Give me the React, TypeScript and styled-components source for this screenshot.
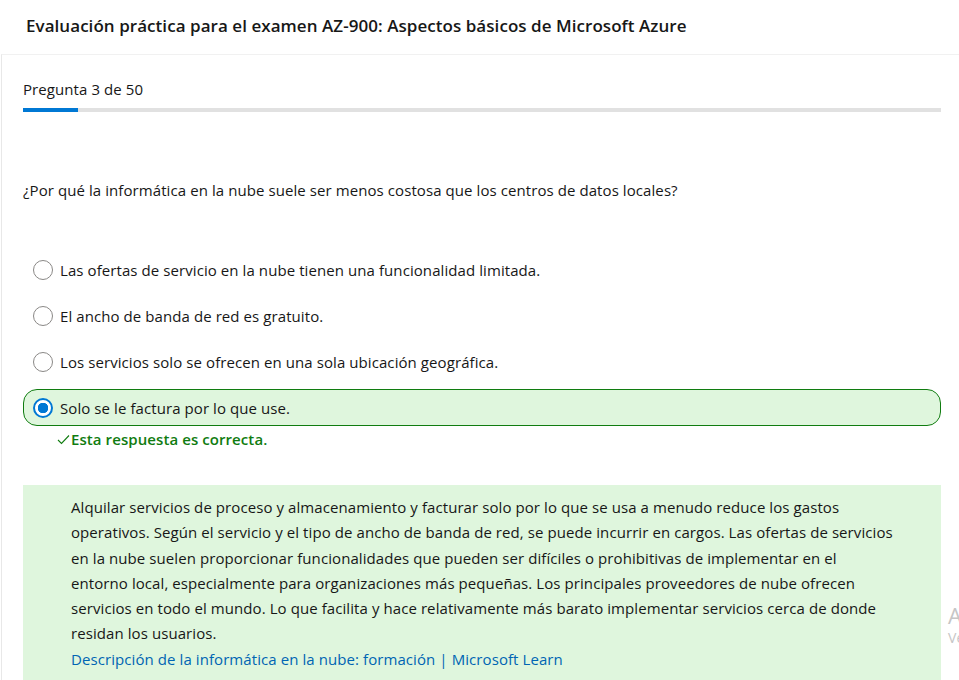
import styled, { createGlobalStyle } from "styled-components";

const GlobalStyle = createGlobalStyle`
  body {
    margin: 0;
    background: #ffffff;
    font-family: "Segoe UI", "Open Sans", "Noto Sans", sans-serif;
    color: #171717;
    letter-spacing: 0.08px;
    overflow: hidden;
  }
`;

const options = [
  "Las ofertas de servicio en la nube tienen una funcionalidad limitada.",
  "El ancho de banda de red es gratuito.",
  "Los servicios solo se ofrecen en una sola ubicación geográfica.",
  "Solo se le factura por lo que use.",
];
const selectedIndex = 3;

const App = () => {
  return (
    <Page>
      <GlobalStyle />
      <Header>Evaluación práctica para el examen AZ-900: Aspectos básicos de Microsoft Azure</Header>
      <Card>
        <Counter>Pregunta 3 de 50</Counter>
        <Progress>
          <ProgressFill style={{ width: `${(3 / 50) * 100}%` }} />
        </Progress>
        <Question>¿Por qué la informática en la nube suele ser menos costosa que los centros de datos locales?</Question>
        <OptionList>
          {options.map((text, i) => (
            <div key={text}>
              <OptionRow $selected={i === selectedIndex}>
                <Radio $checked={i === selectedIndex} />
                <span>{text}</span>
              </OptionRow>
              {i === selectedIndex ? (
                <Feedback>
                  <svg width="13" height="11" viewBox="0 0 13 11" fill="none">
                    <path d="M1 6 L4.5 9.5 L12 1.5" stroke="#107c10" strokeWidth="1.1" />
                  </svg>
                  Esta respuesta es correcta.
                </Feedback>
              ) : null}
            </div>
          ))}
        </OptionList>
        <Explanation>
          <p>
            Alquilar servicios de proceso y almacenamiento y facturar solo por lo que se usa a menudo reduce los gastos
            operativos. Según el servicio y el tipo de ancho de banda de red, se puede incurrir en cargos. Las ofertas de servicios
            en la nube suelen proporcionar funcionalidades que pueden ser difíciles o prohibitivas de implementar en el
            entorno local, especialmente para organizaciones más pequeñas. Los principales proveedores de nube ofrecen
            servicios en todo el mundo. Lo que facilita y hace relativamente más barato implementar servicios cerca de donde
            residan los usuarios.
          </p>
          <DocLink href="#">Descripción de la informática en la nube: formación | Microsoft Learn</DocLink>
        </Explanation>
      </Card>
      <Watermark>
        <strong>Activar Windows</strong>
        <small>Ve a Configuración para activar Windows.</small>
      </Watermark>
    </Page>
  );
};

const Page = styled.div`
  position: relative;
  width: 959px;
  height: 680px;
  overflow: hidden;
`;

const Header = styled.h1`
  margin: 0;
  height: 54px;
  box-sizing: border-box;
  padding: 13px 0 0 26px;
  font-size: 17px;
  font-weight: 600;
  line-height: 26px;
  letter-spacing: 0.05px;
  color: #171717;
`;

const Card = styled.section`
  margin-left: 1px;
  border-top: 1px solid #f1f1f1;
  border-left: 1px solid #e8e8e8;
  padding: 24px 18px 0 21px;
`;

const Counter = styled.div`
  font-size: 15px;
  line-height: 20px;
`;

const Progress = styled.div`
  margin-top: 9px;
  height: 4px;
  background: #e1e1e1;
`;

const ProgressFill = styled.div`
  height: 100%;
  background: #0078d4;
`;

const Question = styled.p`
  margin: 68px 0 0;
  font-size: 15px;
  line-height: 20px;
`;

const OptionList = styled.div`
  margin-top: 51px;
  display: flex;
  flex-direction: column;
  gap: 9px;
`;

const OptionRow = styled.label<{ $selected: boolean }>`
  display: flex;
  align-items: center;
  gap: 7px;
  height: 37px;
  box-sizing: border-box;
  padding-left: 9px;
  font-size: 15px;
  border: 1px solid ${(p) => (p.$selected ? "#107c10" : "transparent")};
  background: ${(p) => (p.$selected ? "#dff6dd" : "transparent")};
  border-radius: 14px;
`;

const Radio = styled.span<{ $checked: boolean }>`
  width: 20px;
  height: 20px;
  box-sizing: border-box;
  border-radius: 50%;
  border: ${(p) => (p.$checked ? "2px solid #0078d4" : "1px solid #8a8886")};
  background: ${(p) =>
    p.$checked ? "radial-gradient(circle, #0078d4 0 5px, #ffffff 5.5px)" : "#ffffff"};
  flex-shrink: 0;
`;

const Feedback = styled.div`
  display: flex;
  align-items: center;
  gap: 1px;
  margin: 2px 0 0 34px;
  font-size: 15px;
  line-height: 22px;
  font-weight: 600;
  color: #107c10;
`;

const Explanation = styled.div`
  margin-top: 35px;
  background: #dff6dd;
  padding: 10px 48px 20px 48px;
  font-size: 15px;
  line-height: 25.3px;

  p {
    margin: 0;
  }
`;

const DocLink = styled.a`
  color: #0065b3;
  text-decoration: none;
`;

const Watermark = styled.div`
  position: absolute;
  left: 948px;
  top: 602px;
  display: flex;
  flex-direction: column;
  white-space: nowrap;
  color: #c6c6c6;

  strong {
    font-size: 22px;
    font-weight: 400;
    line-height: 26px;
  }

  small {
    font-size: 14px;
    line-height: 20px;
  }
`;

export default App;
